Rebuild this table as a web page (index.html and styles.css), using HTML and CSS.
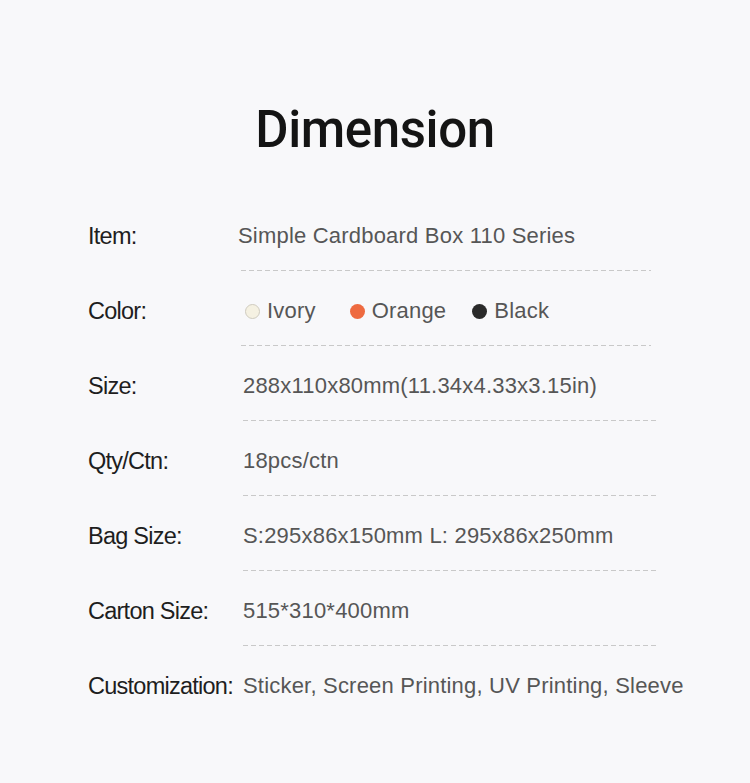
FILE: index.html
```html
<!DOCTYPE html>
<html lang="en">
<head>
<meta charset="utf-8">
<title>Dimension</title>
<link rel="stylesheet" href="styles.css">
</head>
<body>
<main class="page">
  <h1 class="title">Dimension</h1>
  <div class="table">
    <div class="row">
      <div class="label">Item:</div>
      <div class="value value-first">Simple Cardboard Box 110 Series</div>
    </div>
    <div class="divider divider-short"></div>
    <div class="row">
      <div class="label">Color:</div>
      <div class="value colors">
        <span class="swatch-item"><span class="dot dot-ivory"></span>Ivory</span>
        <span class="swatch-item swatch-orange"><span class="dot dot-orange"></span>Orange</span>
        <span class="swatch-item swatch-black"><span class="dot dot-black"></span>Black</span>
      </div>
    </div>
    <div class="divider divider-short"></div>
    <div class="row">
      <div class="label">Size:</div>
      <div class="value">288x110x80mm(11.34x4.33x3.15in)</div>
    </div>
    <div class="divider"></div>
    <div class="row">
      <div class="label">Qty/Ctn:</div>
      <div class="value">18pcs/ctn</div>
    </div>
    <div class="divider"></div>
    <div class="row">
      <div class="label">Bag Size:</div>
      <div class="value">S:295x86x150mm L: 295x86x250mm</div>
    </div>
    <div class="divider"></div>
    <div class="row">
      <div class="label">Carton Size:</div>
      <div class="value">515*310*400mm</div>
    </div>
    <div class="divider"></div>
    <div class="row">
      <div class="label">Customization:</div>
      <div class="value">Sticker, Screen Printing, UV Printing, Sleeve</div>
    </div>
  </div>
</main>
</body>
</html>
```
FILE: styles.css
```css
html, body {
  margin: 0;
  padding: 0;
  background: #f8f8fa;
}
.page {
  width: 750px;
  height: 783px;
  box-sizing: border-box;
  padding-top: 100px;
  font-family: "Liberation Sans", Arial, sans-serif;
}
.title {
  margin: 0;
  text-align: center;
  font-family: Roboto, "Liberation Sans", sans-serif;
  font-weight: 500;
  font-size: 51px;
  line-height: 60px;
  color: #141414;
  letter-spacing: -0.4px;
}
.table {
  margin-top: 61px;
  padding-left: 88px;
}
.row {
  display: flex;
  align-items: center;
  height: 30px;
}
.label {
  width: 155px;
  flex: none;
  font-size: 23.5px;
  color: #1e1e1e;
  letter-spacing: -0.75px;
  white-space: nowrap;
}
.value {
  font-size: 22px;
  color: #565656;
  letter-spacing: 0.2px;
  white-space: nowrap;
}
.value-first {
  margin-left: -5px;
}
.colors {
  display: flex;
  align-items: center;
  margin-left: 2px;
}
.swatch-item {
  display: inline-flex;
  align-items: center;
  gap: 7px;
}
.swatch-orange {
  margin-left: 34px;
}
.swatch-black {
  margin-left: 26px;
}
.dot {
  width: 15px;
  height: 15px;
  border-radius: 50%;
  box-sizing: border-box;
  flex: none;
}
.dot-ivory {
  background: #f5f1e2;
  border: 1px solid #cfcbbf;
}
.dot-orange {
  background: #ee6a40;
}
.dot-black {
  background: #2a2a2a;
}
.divider {
  margin: 19px 0 25px 155px;
  width: 416px;
  height: 1px;
  background-image: linear-gradient(to right, #c9c9c9 0 5px, transparent 5px 8px);
  background-size: 8px 1px;
  background-repeat: repeat-x;
}
.divider-short {
  margin-left: 153px;
  width: 410px;
}
```
